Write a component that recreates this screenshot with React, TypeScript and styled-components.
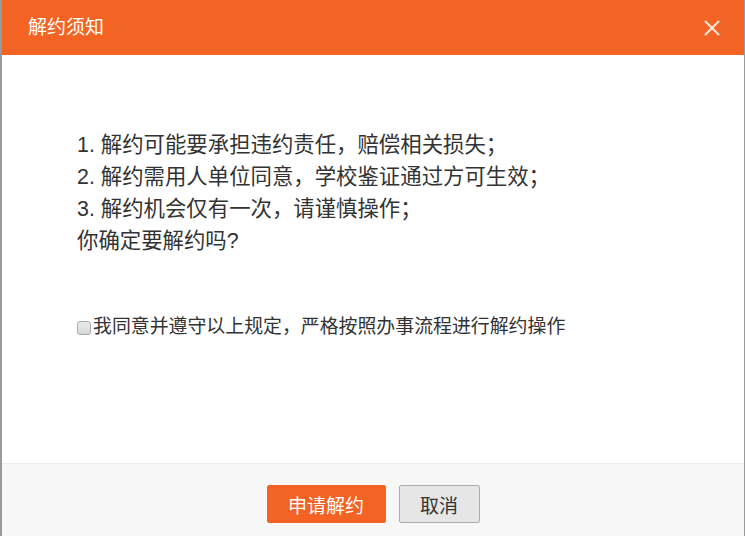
import React, { useState } from "react";
import styled, { createGlobalStyle } from "styled-components";

const GlobalStyle = createGlobalStyle`
  html, body {
    margin: 0;
    padding: 0;
    height: 100%;
    overflow: hidden;
  }
  body {
    background: #9a9a9a;
    font-family: "Liberation Sans", "Noto Sans CJK SC", sans-serif;
  }
`;

const orange = "#f36424";

const Dialog = styled.div`
  margin-left: 2px;
  width: 742px;
  height: 536px;
  display: flex;
  flex-direction: column;
  background: #fff;
`;

const Header = styled.div`
  height: 55px;
  flex-shrink: 0;
  background: ${orange};
  display: flex;
  align-items: center;
  justify-content: space-between;
  padding: 0 24px 0 26px;
  box-sizing: border-box;
`;

const Title = styled.div`
  color: #fff;
  font-size: 19px;
  line-height: 55px;
`;

const Close = styled.button`
  border: none;
  background: transparent;
  padding: 0;
  width: 17px;
  height: 17px;
  display: flex;
  align-items: center;
  justify-content: center;
  cursor: pointer;
  margin-top: 1px;
`;

const Body = styled.div`
  flex: 1;
  padding: 74px 0 0 75px;
  color: #333;
`;

const Notice = styled.div`
  font-size: 21.4px;
  line-height: 32px;
`;

const Agree = styled.label`
  display: flex;
  align-items: center;
  margin-top: 58px;
  font-size: 18.9px;
  line-height: 24px;
  cursor: pointer;
`;

const Check = styled.input`
  appearance: none;
  width: 14px;
  height: 14px;
  margin: 1px 2px 0 0;
  border: 1px solid #a9a9a9;
  border-radius: 3px;
  box-sizing: border-box;
  background: linear-gradient(#ececec, #d8d8d8);
  cursor: pointer;
  &:checked {
    background: ${orange};
    border-color: ${orange};
  }
`;

const Footer = styled.div`
  height: 73px;
  flex-shrink: 0;
  background: #f7f7f7;
  border-top: 1px solid #ececec;
  display: flex;
  justify-content: center;
  padding-top: 21px;
  box-sizing: border-box;
  gap: 13px;
`;

const Button = styled.button<{ $primary?: boolean }>`
  height: 38px;
  padding: 0;
  width: ${(p) => (p.$primary ? "119px" : "81px")};
  font-family: "Liberation Sans", "Noto Sans CJK SC", sans-serif;
  font-size: 19px;
  border-radius: 2px;
  box-sizing: border-box;
  cursor: pointer;
  color: ${(p) => (p.$primary ? "#fff" : "#333")};
  background: ${(p) => (p.$primary ? orange : "#e6e6e6")};
  border: 1px solid ${(p) => (p.$primary ? orange : "#adadad")};
`;

export default function App() {
  const [agreed, setAgreed] = useState(false);

  return (
    <>
      <GlobalStyle />
      <Dialog>
        <Header>
          <Title>解约须知</Title>
          <Close aria-label="关闭">
            <svg width="16" height="16" viewBox="0 0 16 16">
              <path
                d="M1.5 1.5 L14.5 14.5 M14.5 1.5 L1.5 14.5"
                stroke="rgba(255,255,255,0.85)"
                strokeWidth="2"
                strokeLinecap="round"
              />
            </svg>
          </Close>
        </Header>
        <Body>
          <Notice>
            <div>1. 解约可能要承担违约责任，赔偿相关损失；</div>
            <div>2. 解约需用人单位同意，学校鉴证通过方可生效；</div>
            <div>3. 解约机会仅有一次，请谨慎操作；</div>
            <div>你确定要解约吗?</div>
          </Notice>
          <Agree>
            <Check
              type="checkbox"
              checked={agreed}
              onChange={(e) => setAgreed(e.target.checked)}
            />
            我同意并遵守以上规定，严格按照办事流程进行解约操作
          </Agree>
        </Body>
        <Footer>
          <Button $primary>申请解约</Button>
          <Button>取消</Button>
        </Footer>
      </Dialog>
    </>
  );
}
